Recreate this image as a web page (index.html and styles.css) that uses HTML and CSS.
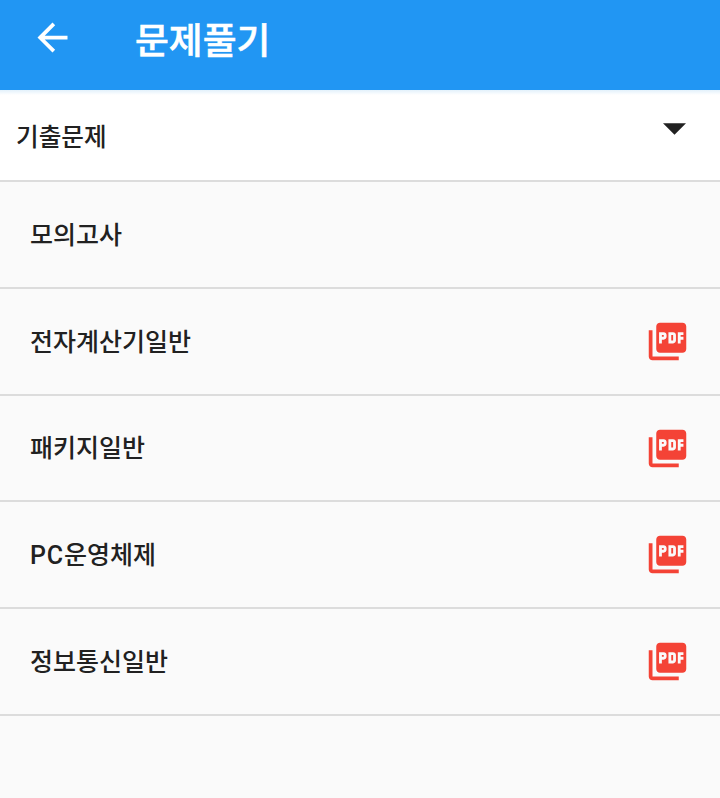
FILE: index.html
```html
<!DOCTYPE html>
<html lang="ko">
<head>
<meta charset="utf-8">
<title>문제풀기</title>
<link rel="stylesheet" href="styles.css">
</head>
<body>
<svg class="defs" width="0" height="0">
  <symbol id="pdf" viewBox="0 0 24 24"><path d="M20 2H8c-1.100 0-2 .9-2 2v12c0 1.100.9 2 2 2h12c1.100 0 2-.9 2-2V4c0-1.100-.9-2-2-2zm-8.500 7.500c0 .83-.67 1.500-1.500 1.500H9v2H7.500V7H10c.83 0 1.500.67 1.500 1.500v1zm5 2c0 .83-.67 1.500-1.500 1.500h-2.500V7H15c.83 0 1.500.67 1.500 1.500v3zm4-3H19v1h1.500V11H19v2h-1.500V7h3v1.500zM9 9.500h1v-1H9v1zM4 6H2v14c0 1.100.9 2 2 2h14v-2H4V6zm10 5.500h1v-3h-1v3z"/></symbol>
</svg>
<header class="bar">
  <svg class="back" viewBox="0 0 24 24"><path d="M20 11H7.830l5.590-5.590L12 4l-8 8 8 8 1.410-1.410L7.830 13H20v-2z"/></svg>
  <h1 class="title">문제풀기</h1>
</header>
<main>
  <div class="select"><span class="value">기출문제</span><svg class="caret" viewBox="0 0 24 12"><path d="M0 0h24L12 12z"/></svg></div>
  <ul class="list">
    <li class="row"><span class="label">모의고사</span></li>
    <li class="row"><span class="label">전자계산기일반</span><svg class="pdf"><use href="#pdf"/></svg></li>
    <li class="row short"><span class="label">패키지일반</span><svg class="pdf"><use href="#pdf"/></svg></li>
    <li class="row"><span class="label"><span class="latin">PC</span>운영체제</span><svg class="pdf"><use href="#pdf"/></svg></li>
    <li class="row"><span class="label">정보통신일반</span><svg class="pdf"><use href="#pdf"/></svg></li>
  </ul>
</main>
</body>
</html>
```
FILE: styles.css
```css
* { box-sizing: border-box; }
body { margin: 0; background: #fafafa; color: #212121; font: 500 25px/36px Roboto, "Noto Sans CJK KR", sans-serif; }
.defs { display: block; }
svg { flex: none; }
.bar { height: 90px; padding: 0 0 15px 30px; display: flex; align-items: center; background: #2196f3; color: #fff; }
.back { width: 45px; height: 45px; fill: #fff; }
.title { margin: 8px 0 0 60px; font-size: 36.8px; line-height: 50px; font-weight: 500; -webkit-text-stroke: 0.5px currentColor; }
.select { height: 92px; padding: 0 34px 0 16px; display: flex; align-items: center; justify-content: space-between; background: linear-gradient(#e3f1fb, #fff 5px); border-bottom: 2px solid #dcdcdc; }
.value { padding-top: 6px; font-size: 24.6px; }
.caret { width: 23px; height: 12px; margin-bottom: 12px; fill: #212121; }
.list { margin: 0; padding: 0; list-style: none; }
.row { height: 107px; padding: 0 30px; display: flex; align-items: center; justify-content: space-between; border-bottom: 2px solid #dcdcdc; }
.label { padding-top: 2px; }
.short { height: 106px; }
.latin { letter-spacing: 0.8px; }
.pdf { width: 45px; height: 45px; fill: #f44336; }
```
